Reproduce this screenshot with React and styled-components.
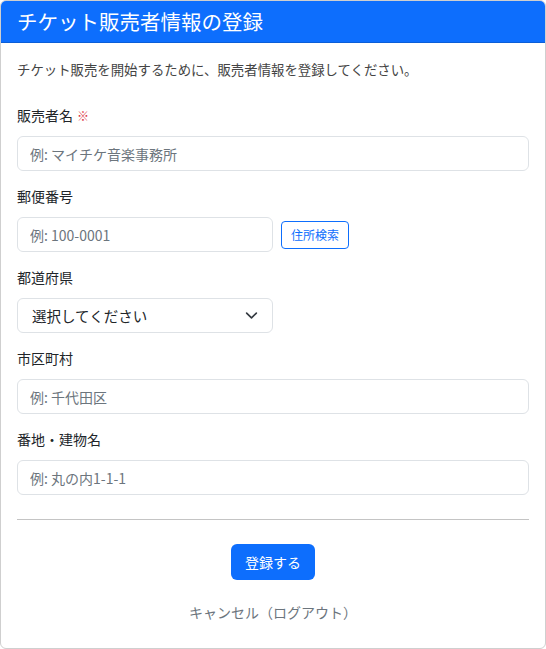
import styled, { createGlobalStyle } from "styled-components";

const GlobalStyle = createGlobalStyle`
  html, body {
    margin: 0;
    padding: 0;
    background: #ffffff;
  }
  body {
    font-family: "Noto Sans CJK JP", "Noto Sans", sans-serif;
    color: #212529;
  }
  * {
    box-sizing: border-box;
  }
`;

const fields = [
  { label: "販売者名", placeholder: "例: マイチケ音楽事務所", required: true },
];

export default function App() {
  return (
    <>
      <GlobalStyle />
      <StyledCard>
        <StyledHeader>
          <StyledTitle>チケット販売者情報の登録</StyledTitle>
        </StyledHeader>
        <StyledBody>
          <StyledLead>
            チケット販売を開始するために、販売者情報を登録してください。
          </StyledLead>

          {fields.map((field) => (
            <StyledGroup key={field.label}>
              <StyledLabel>
                {field.label}
                {field.required && <StyledRequired>※</StyledRequired>}
              </StyledLabel>
              <StyledInput placeholder={field.placeholder} />
            </StyledGroup>
          ))}

          <StyledGroup>
            <StyledLabel>郵便番号</StyledLabel>
            <StyledRow>
              <StyledInput $half placeholder="例: 100-0001" />
              <StyledOutlineButton type="button">住所検索</StyledOutlineButton>
            </StyledRow>
          </StyledGroup>

          <StyledGroup>
            <StyledLabel>都道府県</StyledLabel>
            <StyledSelect>
              <span>選択してください</span>
              <svg width="16" height="16" viewBox="0 0 16 16" fill="none">
                <path
                  d="M2 5l6 6 6-6"
                  stroke="#343a40"
                  strokeWidth="2"
                  strokeLinecap="round"
                  strokeLinejoin="round"
                />
              </svg>
            </StyledSelect>
          </StyledGroup>

          <StyledGroup>
            <StyledLabel>市区町村</StyledLabel>
            <StyledInput placeholder="例: 千代田区" />
          </StyledGroup>

          <StyledGroup>
            <StyledLabel>番地・建物名</StyledLabel>
            <StyledInput placeholder="例: 丸の内1-1-1" />
          </StyledGroup>

          <StyledDivider />

          <StyledActions>
            <StyledPrimaryButton type="button">登録する</StyledPrimaryButton>
            <StyledCancel>キャンセル（ログアウト）</StyledCancel>
          </StyledActions>
        </StyledBody>
      </StyledCard>
    </>
  );
}

const StyledCard = styled.div`
  width: 546px;
  height: 649px;
  border: 1px solid #cfcfcf;
  border-radius: 6px;
  overflow: hidden;
  display: flex;
  flex-direction: column;
  background: #ffffff;
`;

const StyledHeader = styled.header`
  height: 42px;
  background: #0d6efd;
  display: flex;
  align-items: center;
  padding: 0 16px;
  border-bottom: 1px solid #0b5ed7;
`;

const StyledTitle = styled.h1`
  margin: 0;
  color: #ffffff;
  font-size: 20.5px;
  font-weight: 400;
  line-height: 1.2;
`;

const StyledBody = styled.div`
  padding: 16px 16px 0;
  display: flex;
  flex-direction: column;
`;

const StyledLead = styled.p`
  margin: 0 0 25px;
  font-size: 13.4px;
  line-height: 21px;
  color: #444;
`;

const StyledGroup = styled.div`
  display: flex;
  flex-direction: column;
  margin-bottom: 15px;
`;

const StyledLabel = styled.label`
  height: 21px;
  font-size: 14px;
  line-height: 21px;
  margin-bottom: 10px;
  display: flex;
  align-items: center;
  color: #212529;
`;

const StyledRequired = styled.span`
  color: #dc3545;
  font-size: 12px;
  line-height: 1;
  font-weight: 700;
  margin-left: 4px;
`;

const StyledRow = styled.div`
  display: flex;
  align-items: center;
  gap: 8px;
`;

const StyledInput = styled.input`
  width: ${(props) => (props.$half ? "256px" : "100%")};
  height: 35px;
  padding: 0 12px;
  border: 1px solid #dee2e6;
  border-radius: 6px;
  font-family: inherit;
  font-size: 14px;
  color: #212529;
  background: #ffffff;
  outline: none;
  &::placeholder {
    color: #6c757d;
  }
`;

const StyledOutlineButton = styled.button`
  height: 28px;
  padding: 0 9px;
  border: 1px solid #0d6efd;
  border-radius: 4px;
  background: #ffffff;
  color: #0d6efd;
  font-family: inherit;
  font-size: 12px;
  cursor: pointer;
`;

const StyledSelect = styled.div`
  width: 256px;
  height: 35px;
  padding: 0 14px 0 14px;
  border: 1px solid #dee2e6;
  border-radius: 6px;
  display: flex;
  align-items: center;
  justify-content: space-between;
  font-size: 14.5px;
  color: #212529;

  svg {
    width: 13px;
    height: 13px;
  }
`;

const StyledDivider = styled.hr`
  margin: 9px 0 24px;
  border: none;
  border-top: 1px solid #c4c4c4;
`;

const StyledActions = styled.div`
  display: flex;
  flex-direction: column;
  align-items: center;
  gap: 22px;
`;

const StyledPrimaryButton = styled.button`
  height: 36px;
  padding: 0 14px;
  border: none;
  border-radius: 6px;
  background: #0d6efd;
  color: #ffffff;
  font-family: inherit;
  font-size: 14px;
  cursor: pointer;
`;

const StyledCancel = styled.span`
  font-size: 14px;
  line-height: 21px;
  color: #6c757d;
`;
